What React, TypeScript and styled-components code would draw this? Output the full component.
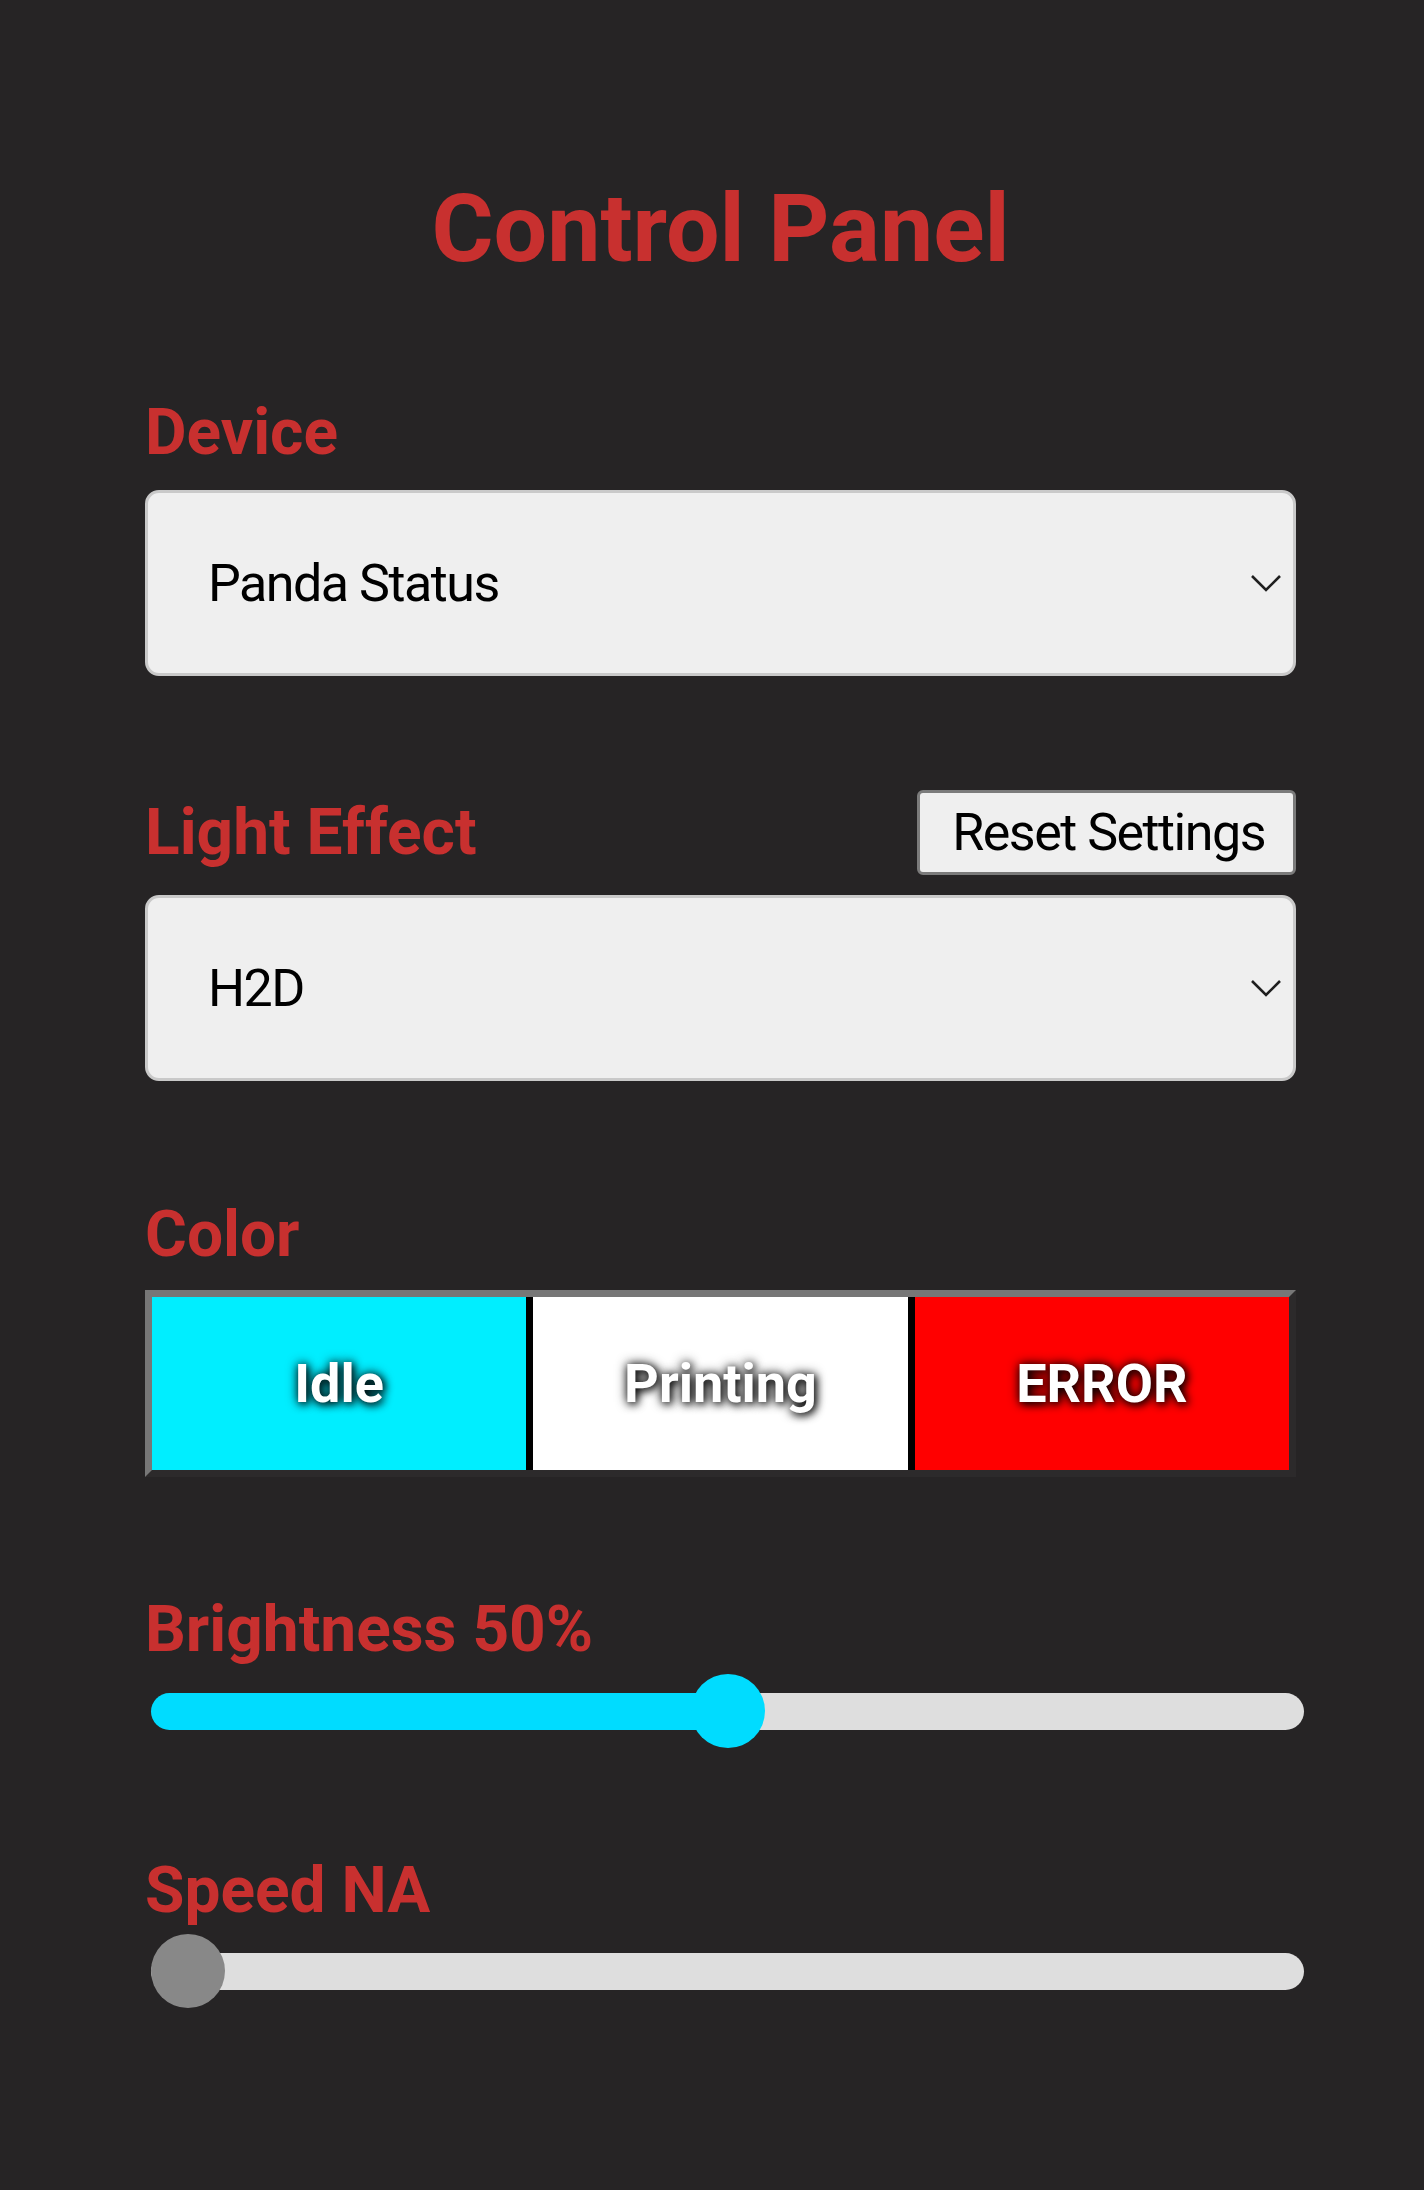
import React from "react";
import styled, { createGlobalStyle } from "styled-components";

const GlobalStyle = createGlobalStyle`
  html, body {
    margin: 0;
    padding: 0;
    background: #262425;
  }
  body {
    font-family: Roboto, "Liberation Sans", Arial, sans-serif;
  }
  * { box-sizing: border-box; }
`;

const RED = "#c8302f";

const Page = styled.main`
  min-height: 2190px;
  padding: 181px 128px 0 145px;
  background: #262425;
`;

const Title = styled.h1`
  margin: 0;
  text-align: center;
  font-size: 95px;
  line-height: 1;
  font-weight: 700;
  color: ${RED};
`;

const Field = styled.section<{ $top: number }>`
  margin-top: ${(p) => p.$top}px;
  display: flex;
  flex-direction: column;
`;

const Label = styled.h2`
  margin: 0;
  font-size: 64px;
  line-height: 1;
  font-weight: 700;
  color: ${RED};
`;

const HeaderRow = styled.div`
  display: flex;
  align-items: center;
  justify-content: space-between;
  height: 85px;
`;

const ResetButton = styled.button`
  height: 85px;
  padding: 0 28px 0 32px;
  background: #efefef;
  border: 3px solid #7b7b7b;
  border-radius: 6px;
  font-family: Roboto, "Liberation Sans", Arial, sans-serif;
  font-size: 52px;
  letter-spacing: -1.5px;
  color: #000;
  cursor: pointer;
`;

const SelectBox = styled.div<{ $gap: number }>`
  margin-top: ${(p) => p.$gap}px;
  height: 186px;
  display: flex;
  align-items: center;
  justify-content: space-between;
  padding: 0 11px 0 60px;
  background: #efefef;
  border: 3px solid #c9c9c9;
  border-radius: 14px;
  font-size: 52px;
  letter-spacing: -1.5px;
  color: #000;
`;

const Chevron = styled.svg`
  width: 32px;
  height: 20px;
  flex: none;
`;

const ColorRow = styled.div`
  margin-top: 23px;
  height: 187px;
  display: grid;
  grid-template-columns: repeat(3, 1fr);
  gap: 7px;
  background: #000;
  border-style: solid;
  border-width: 7px;
  border-color: #777777 #2c2a2b #2c2a2b #777777;
`;

const Swatch = styled.div<{ $bg: string }>`
  background: ${(p) => p.$bg};
  display: flex;
  align-items: center;
  justify-content: center;
  font-size: 54px;
  font-weight: 700;
  color: #fff;
  text-shadow: 2px 2px 8px #000, 0 0 12px rgba(0, 0, 0, 0.85);
`;

const SliderRoot = styled.div<{ $gap: number }>`
  position: relative;
  margin-top: ${(p) => p.$gap}px;
  margin-left: 6px;
  margin-right: -8px;
  height: 74px;
  display: flex;
  align-items: center;
`;

const Track = styled.div`
  width: 100%;
  height: 37px;
  border-radius: 19px;
  background: #dedede;
`;

const Thumb = styled.div<{ $color: string }>`
  position: absolute;
  top: 0;
  width: 74px;
  height: 74px;
  border-radius: 50%;
  background: ${(p) => p.$color};
`;

function Select({ value, gap }: { value: string; gap: number }) {
  return (
    <SelectBox $gap={gap}>
      <span>{value}</span>
      <Chevron viewBox="0 0 32 20">
        <path d="M2 3 L16 17 L30 3" fill="none" stroke="#1f1f1f" strokeWidth="2.6" />
      </Chevron>
    </SelectBox>
  );
}

function Slider({
  value,
  fill,
  thumb,
  gap,
}: {
  value: number;
  fill: string | null;
  thumb: string;
  gap: number;
}) {
  const pos = `calc(37px + ${value} * (100% - 74px))`;
  const bg = fill
    ? `linear-gradient(to right, ${fill} 0, ${fill} ${pos}, #dedede ${pos}, #dedede 100%)`
    : undefined;
  return (
    <SliderRoot $gap={gap}>
      <Track style={bg ? { background: bg } : undefined} />
      <Thumb $color={thumb} style={{ left: `calc(${value} * (100% - 74px))` }} />
    </SliderRoot>
  );
}

export default function App() {
  return (
    <>
      <GlobalStyle />
      <Page>
        <Title>Control Panel</Title>

        <Field $top={125}>
          <Label>Device</Label>
          <Select value="Panda Status" gap={25} />
        </Field>

        <Field $top={114}>
          <HeaderRow>
            <Label>Light Effect</Label>
            <ResetButton>Reset Settings</ResetButton>
          </HeaderRow>
          <Select value="H2D" gap={20} />
        </Field>

        <Field $top={122}>
          <Label>Color</Label>
          <ColorRow>
            <Swatch $bg="#00eeff">Idle</Swatch>
            <Swatch $bg="#ffffff">Printing</Swatch>
            <Swatch $bg="#ff0000">ERROR</Swatch>
          </ColorRow>
        </Field>

        <Field $top={121}>
          <Label>Brightness 50%</Label>
          <Slider value={0.5} fill="#00dcff" thumb="#00dcff" gap={12} />
        </Field>

        <Field $top={111}>
          <Label>Speed NA</Label>
          <Slider value={0} fill={null} thumb="#888888" gap={11} />
        </Field>
      </Page>
    </>
  );
}
